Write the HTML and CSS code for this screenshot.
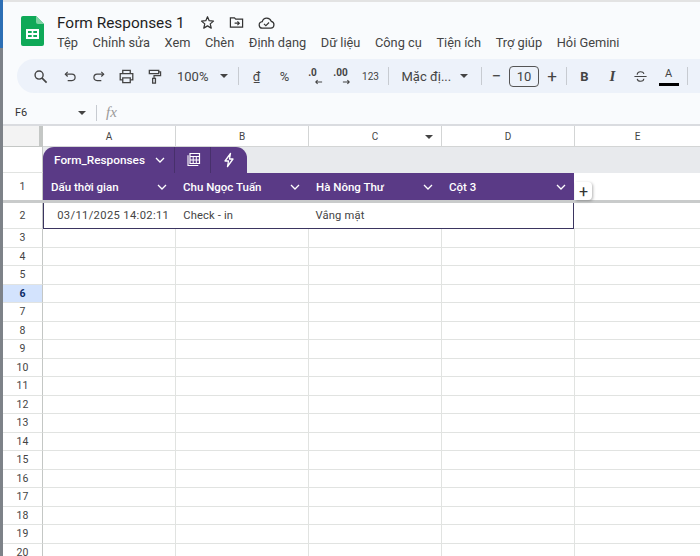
FILE: index.html
```html
<!DOCTYPE html>
<html lang="vi">
<head>
<meta charset="utf-8">
<title>Form Responses 1</title>
<link rel="stylesheet" href="styles.css">
</head>
<body>
<div class="edge"></div>
<div class="app">
  <header class="top">
    <svg class="logo" viewBox="0 0 23 30"><path d="M2 0h13l8 8v20a2 2 0 0 1-2 2H2a2 2 0 0 1-2-2V2a2 2 0 0 1 2-2z" fill="#0fa958"/><path d="M15 0l8 8h-6a2 2 0 0 1-2-2z" fill="#7fd3a3"/><path d="M5 13h13v10H5z" fill="#fff"/><path d="M7 15h3.7v2H7zM12.300 15H16v2h-3.700zM7 19h3.700v2H7zM12.300 19H16v2h-3.700z" fill="#0fa958"/></svg>
    <div class="titles">
      <div class="title-row">
        <span class="doc-title">Form Responses 1</span>
        <svg class="tico star" viewBox="0 0 16 16"><path d="M8 1.800l1.800 4.300 4.600.4-3.500 3 1.100 4.500L8 11.600 4 14l1.100-4.500-3.500-3 4.600-.4z" fill="none" stroke="#333" stroke-width="1.300" stroke-linejoin="round"/></svg>
        <svg class="tico" viewBox="0 0 16 16"><path d="M1.500 3h4.300l1.400 1.500h7.300v8.500h-13z" fill="none" stroke="#333" stroke-width="1.300"/><path d="M6 8.700h5M9 6.700l2 2-2 2" fill="none" stroke="#333" stroke-width="1.200"/></svg>
        <svg class="tico cloud" viewBox="0 0 18 14"><path d="M5 12.500a3.500 3.500 0 0 1-.5-7A5 5 0 0 1 14 5.200a3.700 3.700 0 0 1-.5 7.300z" fill="none" stroke="#333" stroke-width="1.300"/><path d="M6.300 8l2 1.800 3.400-3.300" fill="none" stroke="#333" stroke-width="1.200"/></svg>
      </div>
      <nav class="menu">
        <span>Tệp</span><span>Chỉnh sửa</span><span>Xem</span><span>Chèn</span><span>Định dạng</span><span>Dữ liệu</span><span>Công cụ</span><span>Tiện ích</span><span>Trợ giúp</span><span>Hỏi Gemini</span>
      </nav>
    </div>
  </header>

  <div class="toolbar">
    <span class="tb search"><svg viewBox="0 0 16 16"><circle cx="6.500" cy="6.500" r="4.300" fill="none" stroke="#444" stroke-width="1.500"/><path d="M9.700 9.700l4.800 4.800" stroke="#444" stroke-width="1.800"/></svg></span>
    <span class="tb"><svg viewBox="0 0 16 16"><path d="M5 3L2.500 5.500 5 8" fill="none" stroke="#444" stroke-width="1.300"/><path d="M3 5.500h6.500a3.300 3.300 0 0 1 0 6.800H5" fill="none" stroke="#444" stroke-width="1.300"/></svg></span>
    <span class="tb"><svg viewBox="0 0 16 16"><path d="M11 3l2.500 2.500L11 8" fill="none" stroke="#444" stroke-width="1.300"/><path d="M13 5.500H6.500a3.300 3.300 0 0 0 0 6.800H11" fill="none" stroke="#444" stroke-width="1.300"/></svg></span>
    <span class="tb"><svg viewBox="0 0 16 16"><path d="M4 5V1.500h8V5M4 11.500H1.300V5h13.400v6.500H12" fill="none" stroke="#444" stroke-width="1.400"/><path d="M4 9.500h8v5H4z" fill="none" stroke="#444" stroke-width="1.400"/></svg></span>
    <span class="tb"><svg viewBox="0 0 16 16"><path d="M2.500 1.500h10v3.500h-10z" fill="none" stroke="#444" stroke-width="1.400"/><path d="M12.500 3h2v4H7.500v3" fill="none" stroke="#444" stroke-width="1.300"/><path d="M6 10h3v5H6z" fill="none" stroke="#444" stroke-width="1.400"/></svg></span>
    <span class="zoomval">100%</span><i class="caret"></i>
    <b class="sep"></b>
    <span class="tb txt">₫</span>
    <span class="tb txt">%</span>
    <span class="tb dec">.0<svg class="arr" viewBox="0 0 10 6"><path d="M9 3H2M4 1L2 3l2 2" fill="none" stroke="#444" stroke-width="1.200"/></svg></span>
    <span class="tb dec">.00<svg class="arr" viewBox="0 0 10 6"><path d="M1 3h7M6 1l2 2-2 2" fill="none" stroke="#444" stroke-width="1.200"/></svg></span>
    <span class="tb num">123</span>
    <b class="sep s1"></b>
    <span class="font">Mặc đị...</span><i class="caret"></i>
    <b class="sep s2"></b>
    <span class="tb pm">−</span>
    <span class="size">10</span>
    <span class="tb pm plus">+</span>
    <b class="sep s3"></b>
    <span class="tb bold">B</span>
    <span class="tb ital">I</span>
    <span class="tb"><svg viewBox="0 0 16 16"><path d="M1.500 8h13" stroke="#444" stroke-width="1.200"/><path d="M4.500 6c0-4 7-4 7-.8M4.500 10.500c.5 3.500 7 3.500 7 0" fill="none" stroke="#444" stroke-width="1.200"/></svg></span>
    <span class="tb color">A</span>
    <b class="sep s4"></b>
  </div>

  <div class="formula">
    <span class="cellref">F6</span><i class="caret"></i>
    <b class="sep short"></b>
    <span class="fx">fx</span>
  </div>

  <div class="sheet">
    <div class="row colhead">
      <div class="corner"></div>
      <div class="col">A</div>
      <div class="col">B</div>
      <div class="col hascaret">C<i class="caret colcaret"></i></div>
      <div class="col">D</div>
      <div class="col last">E</div>
    </div>

    <div class="row tabrow">
      <div class="rn blank"></div>
      <div class="tabarea">
        <div class="tab">
          <span class="tabname">Form_Responses
            <svg class="chev" viewBox="0 0 10 6"><path d="M1 1l4 4 4-4" fill="none" stroke="currentColor" stroke-width="1.300"/></svg>
          </span>
          <span class="tabicon"><svg viewBox="0 0 16 16"><path d="M3 3.200v10.300h10.300" fill="none" stroke="#fff" stroke-width="1.100"/><path d="M5 1.500h9.500v10H5z" fill="none" stroke="#fff" stroke-width="1.200"/><path d="M5 4.500h9.500M8.200 4.500v7M11.300 4.500v7M5 8h9.500" stroke="#fff" stroke-width="1"/></svg></span>
          <span class="tabicon end"><svg viewBox="0 0 16 16"><path d="M9.500 1.500L4 9h3.500l-1 5.500L12 7H8.500z" fill="none" stroke="#fff" stroke-width="1.300" stroke-linejoin="round"/></svg></span>
        </div>
      </div>
    </div>

    <div class="row headrow">
      <div class="rn">1</div>
      <div class="hd">Dấu thời gian<svg class="chev" viewBox="0 0 10 6"><path d="M1 1l4 4 4-4" fill="none" stroke="currentColor" stroke-width="1.300"/></svg></div>
      <div class="hd">Chu Ngọc Tuấn<svg class="chev" viewBox="0 0 10 6"><path d="M1 1l4 4 4-4" fill="none" stroke="currentColor" stroke-width="1.300"/></svg></div>
      <div class="hd">Hà Nông Thư<svg class="chev" viewBox="0 0 10 6"><path d="M1 1l4 4 4-4" fill="none" stroke="currentColor" stroke-width="1.300"/></svg></div>
      <div class="hd hd-end">Cột 3<svg class="chev" viewBox="0 0 10 6"><path d="M1 1l4 4 4-4" fill="none" stroke="currentColor" stroke-width="1.300"/></svg></div>
      <div class="c last"></div>
      <span class="addcol">+</span>
    </div>

    <div class="row datarow">
      <div class="rn">2</div>
      <div class="data">
        <div class="d date">03/11/2025 14:02:11</div>
        <div class="d">Check - in</div>
        <div class="d">Vắng mặt</div>
        <div class="d nr"></div>
      </div>
      <div class="c last"></div>
    </div>

    <div class="row plain"><div class="rn">3</div><div class="c"></div><div class="c"></div><div class="c"></div><div class="c"></div><div class="c last"></div></div>
    <div class="row plain"><div class="rn">4</div><div class="c"></div><div class="c"></div><div class="c"></div><div class="c"></div><div class="c last"></div></div>
    <div class="row plain"><div class="rn">5</div><div class="c"></div><div class="c"></div><div class="c"></div><div class="c"></div><div class="c last"></div></div>
    <div class="row plain"><div class="rn sel">6</div><div class="c"></div><div class="c"></div><div class="c"></div><div class="c"></div><div class="c last"></div></div>
    <div class="row plain"><div class="rn">7</div><div class="c"></div><div class="c"></div><div class="c"></div><div class="c"></div><div class="c last"></div></div>
    <div class="row plain"><div class="rn">8</div><div class="c"></div><div class="c"></div><div class="c"></div><div class="c"></div><div class="c last"></div></div>
    <div class="row plain"><div class="rn">9</div><div class="c"></div><div class="c"></div><div class="c"></div><div class="c"></div><div class="c last"></div></div>
    <div class="row plain"><div class="rn">10</div><div class="c"></div><div class="c"></div><div class="c"></div><div class="c"></div><div class="c last"></div></div>
    <div class="row plain"><div class="rn">11</div><div class="c"></div><div class="c"></div><div class="c"></div><div class="c"></div><div class="c last"></div></div>
    <div class="row plain"><div class="rn">12</div><div class="c"></div><div class="c"></div><div class="c"></div><div class="c"></div><div class="c last"></div></div>
    <div class="row plain"><div class="rn">13</div><div class="c"></div><div class="c"></div><div class="c"></div><div class="c"></div><div class="c last"></div></div>
    <div class="row plain"><div class="rn">14</div><div class="c"></div><div class="c"></div><div class="c"></div><div class="c"></div><div class="c last"></div></div>
    <div class="row plain"><div class="rn">15</div><div class="c"></div><div class="c"></div><div class="c"></div><div class="c"></div><div class="c last"></div></div>
    <div class="row plain"><div class="rn">16</div><div class="c"></div><div class="c"></div><div class="c"></div><div class="c"></div><div class="c last"></div></div>
    <div class="row plain"><div class="rn">17</div><div class="c"></div><div class="c"></div><div class="c"></div><div class="c"></div><div class="c last"></div></div>
    <div class="row plain"><div class="rn">18</div><div class="c"></div><div class="c"></div><div class="c"></div><div class="c"></div><div class="c last"></div></div>
    <div class="row plain"><div class="rn">19</div><div class="c"></div><div class="c"></div><div class="c"></div><div class="c"></div><div class="c last"></div></div>
    <div class="row plain"><div class="rn">20</div><div class="c"></div><div class="c"></div><div class="c"></div><div class="c"></div><div class="c last"></div></div>
  </div>
</div>
</body>
</html>
```

FILE: styles.css
```css
* { box-sizing: border-box; }
html, body { margin: 0; height: 100%; overflow: hidden; }
body {
  display: flex;
  width: 700px;
  height: 556px;
  background: #fff;
  font-family: Roboto, "Liberation Sans", sans-serif;
  color: #444;
}
.edge {
  flex: 0 0 3px;
  background: linear-gradient(#2d6fb5 0 48px, #7d8288 48px);
}
.app { flex: 1; min-width: 0; display: flex; flex-direction: column; background: #f9fbfd; border-top: 2px solid #e3e3e3; }

/* Title */
.top { display: flex; height: 57px; padding: 14px 0 0 18px; }
.logo { width: 23px; height: 30px; flex: none; }
.titles { margin-left: 13px; }
.title-row { display: flex; align-items: center; height: 17px; margin-top: -2px; }
.doc-title { flex: none; font-size: 15.400px; color: #1f1f1f; width: 143px; }
.tico { width: 15px; height: 15px; margin-right: 14px; flex: none; }
.tico.cloud { width: 17px; height: 14px; }
.menu { display: flex; gap: 14.600px; margin-top: 4px; font-size: 12.800px; color: #444; line-height: 16px; white-space: nowrap; }

/* Toolbar */
.toolbar {
  display: flex;
  align-items: center;
  height: 34px;
  margin-left: 14px;
  padding-left: 9px;
  background: #edf2fa;
  border-radius: 17px 0 0 17px;
  white-space: nowrap;
  overflow: hidden;
}
.tb { flex: 0 0 28px; height: 28px; display: flex; align-items: center; justify-content: center; font-size: 13px; color: #444; }
.tb svg { width: 15px; height: 15px; }
.search { margin-right: 2px; }
.zoomval { flex: none; margin-left: 9px; width: 40px; font-size: 13px; }
.caret { display: block; flex: none; width: 0; height: 0; border: 4px solid transparent; border-top: 4px solid #444; border-bottom: 0; }
.toolbar > .caret { margin-left: 3px; }
.sep { flex: none; width: 1px; height: 18px; background: #c7cbd1; margin: 0 3.500px 0 10px; }
.sep.s1 { margin-left: 3.500px; }
.sep.s2 { margin-left: 12.500px; }
.sep.s3 { margin-left: 2.500px; }
.sep.s4 { margin-left: 4.500px; }
.txt { font-size: 13px; }
.dec { font-size: 10px; font-weight: 700; position: relative; padding-bottom: 7px; }
.dec .arr { position: absolute; left: 15px; top: 17px; width: 9px; height: 6px; }
.num { font-size: 10px; margin-left: 2px; }
.font { flex: none; margin-left: 9px; width: 55.500px; font-size: 13px; overflow: hidden; }
.pm { flex-basis: 23px; font-size: 17px; }
.plus { margin-left: 1.500px; }
.size { flex: 0 0 30px; height: 21px; border: 1px solid #555; border-radius: 4px; text-align: center; font-size: 13px; line-height: 19px; margin: 0 0 0 1px; }
.bold { font-weight: 700; }
.ital { font-family: "Liberation Serif", serif; font-style: italic; font-weight: 700; font-size: 15px; }
.color { font-size: 11px; position: relative; padding-bottom: 5px; }
.color::after { content: ""; position: absolute; left: 4px; right: 4px; bottom: 4px; height: 3px; background: #000; }

/* Formula bar */
.formula { display: flex; align-items: center; height: 31px; padding: 8px 0 0 12px; }
.cellref { flex: none; width: 63px; font-size: 11px; color: #333; }
.sep.short { margin: 0 0 0 10px; height: 16px; }
.fx { margin-left: 9px; font-family: "Liberation Serif", serif; font-style: italic; font-size: 15px; color: #999; }

/* Grid */
.sheet { flex: 1; background: #fff; overflow: hidden; border-top: 2px solid #dadce0; }
.row { display: flex; position: relative; }
.rn, .corner { flex: 0 0 40px; border-right: 1px solid #c4c7c5; border-bottom: 1px solid #e1e3e1; display: flex; align-items: center; justify-content: center; font-size: 10.500px; color: #444; background: #fff; }
.colhead { height: 21px; background: #fff; }
.corner { background: #f3f3f3; border-right: 4px solid #c4c7c5; border-bottom: 1px solid #c4c7c5; }
.col { flex: 0 0 133px; display: flex; align-items: center; justify-content: center; font-size: 10px; color: #444; border-right: 1px solid #d3d5d5; border-bottom: 1px solid #d3d5d5; position: relative; }
.colcaret { position: absolute; right: 8px; top: 9px; }
.last { flex: 1; border-right: 0; }

.tabrow { height: 26px; }
.tabarea { flex: 1; background: #e8eaed; }
.tab { display: inline-flex; height: 26px; background: #5a3a86; color: #fff; border-radius: 11px 11px 0 0; }
.tabname { flex: none; width: 132px; padding: 0 0 1px 11px; display: flex; align-items: center; font-size: 11.800px; font-weight: 500; border-right: 1px solid #47306b; white-space: nowrap; }
.tabname .chev { margin-left: 10px; }
.tabicon { width: 36px; display: flex; align-items: center; justify-content: center; border-right: 1px solid #47306b; }
.tabicon.end { border-right: 0; }
.tabicon svg { width: 16px; height: 16px; }
.chev { width: 10px; height: 6px; flex: none; }

.headrow { height: 30px; border-bottom: 3px solid #c9cbcb; }
.headrow .rn { border-bottom: 0; }
.hd { flex: 0 0 133px; display: flex; align-items: center; justify-content: space-between; padding: 0 9px 0 7px; background: #5a3a86; color: #fff; font-size: 11.500px; font-weight: 500; }
.rn + .hd { padding-left: 8px; }
.hd.hd-end { flex-basis: 132px; padding-right: 8px; }
.c { flex: 0 0 133px; border-right: 1px solid #e1e3e1; border-bottom: 1px solid #e1e3e1; }
.headrow .c { border-bottom: 0; }
.c.last { flex: 1; border-right: 0; }
.addcol { position: absolute; left: 572px; top: 9px; width: 17px; height: 18px; background: #fff; border-radius: 0 4px 4px 0; box-shadow: 1px 1px 3px rgba(0,0,0,.3); display: flex; align-items: center; justify-content: center; font-size: 16px; color: #333; }

.datarow { height: 26px; }
.data { flex: 0 0 531px; display: flex; border: 1px solid #3b3560; border-top: 0; }
.d { flex: 1; display: flex; align-items: center; padding-left: 7px; font-size: 11.200px; letter-spacing: .15px; color: #444; }
.date { justify-content: flex-end; padding-right: 7px; padding-left: 0; letter-spacing: .35px; }

.plain { height: 18.500px; }
.rn.sel { background: #d3e3fd; font-weight: 700; color: #0b2a66; }
```
